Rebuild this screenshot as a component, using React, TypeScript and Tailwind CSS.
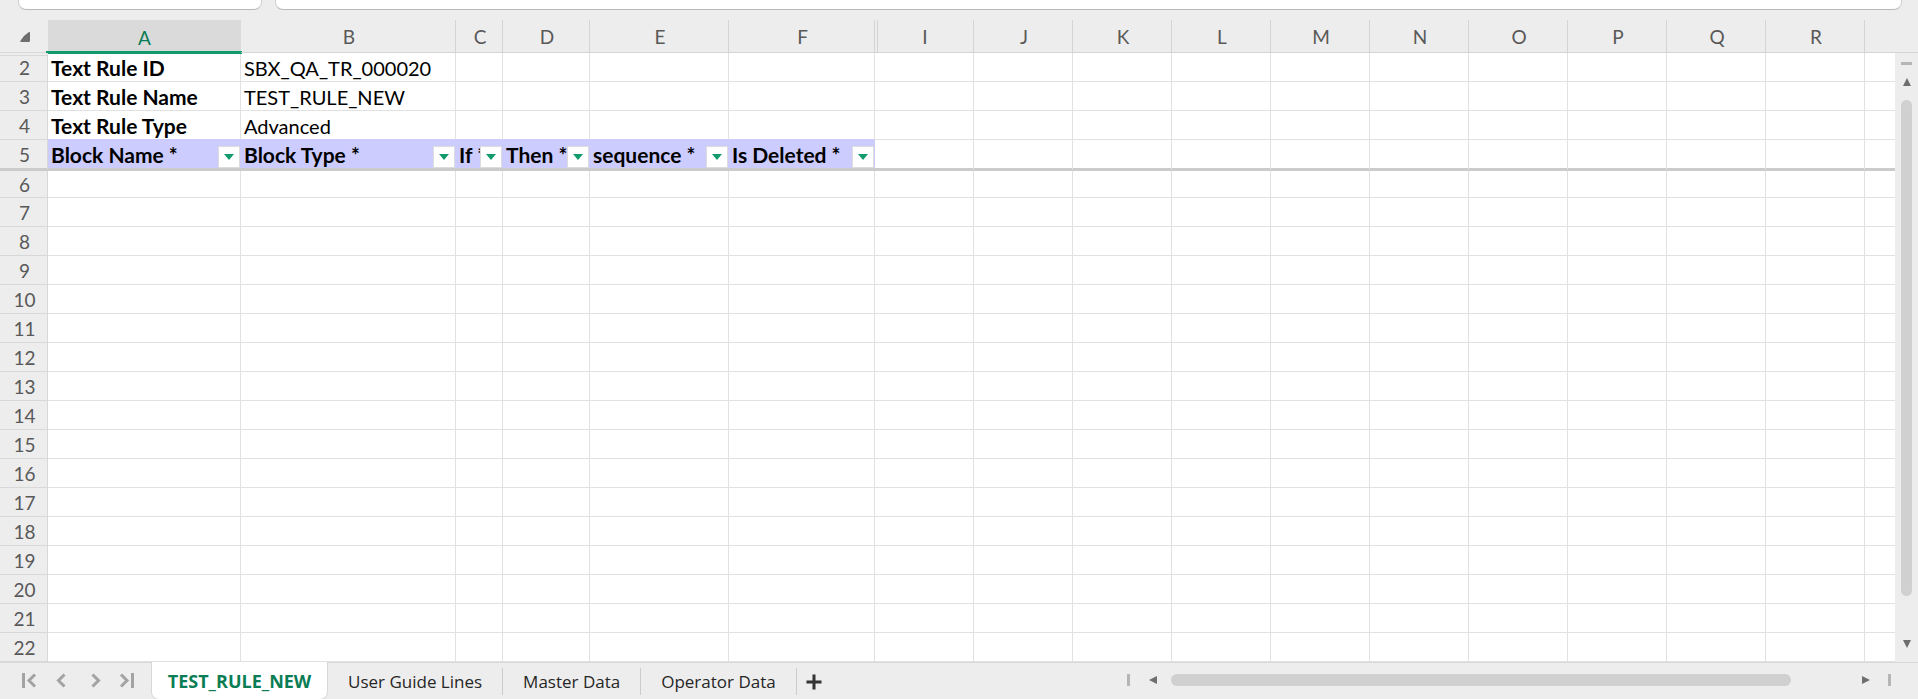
type Column = {
	name: string;
	width: string;
};

type FilterCell = {
	label: string;
	column: string;
};

const COLUMNS: Column[] = [
	{ name: 'A', width: 'w-[193px]' },
	{ name: 'B', width: 'w-[215px]' },
	{ name: 'C', width: 'w-[47px]' },
	{ name: 'D', width: 'w-[87px]' },
	{ name: 'E', width: 'w-[139px]' },
	{ name: 'F', width: 'w-[146px]' },
	...['I', 'J', 'K', 'L', 'M', 'N', 'O', 'P', 'Q', 'R'].map((name) => ({ name, width: 'w-[99px]' })),
]

const DETAILS = [
	{ row: 2, label: 'Text Rule ID', value: 'SBX_QA_TR_000020' },
	{ row: 3, label: 'Text Rule Name', value: 'TEST_RULE_NEW' },
	{ row: 4, label: 'Text Rule Type', value: 'Advanced' },
]

const FILTERS: FilterCell[] = [
	{ column: 'A', label: 'Block Name *' },
	{ column: 'B', label: 'Block Type *' },
	{ column: 'C', label: 'If *' },
	{ column: 'D', label: 'Then *' },
	{ column: 'E', label: 'sequence *' },
	{ column: 'F', label: 'Is Deleted *' },
]

const EMPTY_ROWS = Array.from({ length: 17 }, (_, i) => i + 6)

const TABS = ['User Guide Lines', 'Master Data', 'Operator Data']

const CELL = 'border-r border-b border-[#e1e1e1] p-0'
const ROW_HEAD = 'border-r border-b border-[#d8d8d8] bg-[#ededed] p-0 pt-[2px] pl-[2px] font-normal text-[#595959]'

function Toolbar() {
	return (
		<div className="flex h-5 items-start gap-[13px] pr-4 pl-[18px]">
			<input
				aria-label="Name box"
				className="h-[10px] w-[244px] rounded-b-lg border border-t-0 border-[#d0d0d0] border-b-[#b8b8b8] bg-white"
			/>
			<input
				aria-label="Formula bar"
				className="h-[10px] min-w-0 flex-1 rounded-b-lg border border-t-0 border-[#d0d0d0] border-b-[#b8b8b8] bg-white"
			/>
		</div>
	)
}

function ColumnHeads() {
	return (
		<tr className="h-[33px]">
			<th className="border-b border-[#d8d8d8] p-0">
				<button aria-label="Select all" className="flex w-full justify-end pt-[2px] pr-[18px]">
					<svg width="10" height="10" viewBox="0 0 10 10" fill="#6e6e6e">
						<path d="M8.600.3Q10-.3 10 1v7.500Q10 10 8.500 10H1Q-.4 10 .5 8.800 4 3 8.600.3z" />
					</svg>
				</button>
			</th>
			{COLUMNS.map(({ name }) => (
				<th
					key={name}
					scope="col"
					className={
						name === 'A'
							? 'relative bg-[#dadada] p-0 pt-[2px] font-normal text-[#0a7d55]'
							: 'relative border-r border-b border-[#d4d4d4] p-0 pt-[2px] pl-[2px] font-normal text-[#595959]'
					}
				>
					{name}
					{name === 'A' && <span className="absolute -right-px -bottom-px -left-[2px] h-[3px] bg-[#119a6b]" />}
					{name === 'I' && <span className="absolute top-0 bottom-0 left-[2px] w-px bg-[#d4d4d4]" />}
				</th>
			))}
			<th className="border-b border-[#d4d4d4] p-0" />
		</tr>
	)
}

function FilterRow() {
	return (
		<tr className="h-[31px]">
			<th scope="row" className="border-r border-b-[3px] border-r-[#d8d8d8] border-b-[#cbcbcb] bg-[#ededed] p-0 pt-[2px] pl-[2px] font-normal text-[#595959]">
				5
			</th>
			{COLUMNS.map(({ name }) => {
				const filter = FILTERS.find((f) => f.column === name)
				if (!filter) {
					return <td key={name} className="border-r border-b-[3px] border-r-[#e1e1e1] border-b-[#cbcbcb] p-0" />
				}
				return (
					<td key={name} className="relative overflow-hidden border-b-[3px] border-[#cbcbcb] bg-[#ccccff] p-0 pt-[2px] pl-[3px] text-[21px] leading-6 font-bold whitespace-nowrap">
						{filter.label}
						<button
							aria-label={`Filter ${filter.label}`}
							className="absolute right-px bottom-0 flex size-[22px] items-center justify-center border border-[#dcdcdc] bg-white"
						>
							<svg width="10" height="6" viewBox="0 0 10 6" fill="#119a6b">
								<path d="M0 0h10L5 6z" />
							</svg>
						</button>
					</td>
				)
			})}
			<td className="border-b-[3px] border-[#cbcbcb] p-0" />
		</tr>
	)
}

function Sheet() {
	return (
		<table className="min-w-0 flex-1 table-fixed border-separate border-spacing-0 bg-white font-['Lato',sans-serif] text-[19px] leading-6 text-black">
			<colgroup>
				<col className="w-12" />
				{COLUMNS.map(({ name, width }) => (
					<col key={name} className={width} />
				))}
				<col />
			</colgroup>
			<thead className="bg-[#ededed]">
				<ColumnHeads />
			</thead>
			<tbody>
				{DETAILS.map(({ row, label, value }) => (
					<tr key={row} className="h-[29px]">
						<th scope="row" className={`relative ${ROW_HEAD}`}>
							{row === 2 && <span className="absolute top-[2px] right-0 left-0 h-px bg-[#d8d8d8]" />}
							{row}
						</th>
						{COLUMNS.map(({ name }, i) => (
							<td
								key={name}
								className={
									row === 4 && i < FILTERS.length
										? 'border-r border-b border-r-[#e1e1e1] border-b-[#ccccff] p-0 pt-[2px] pl-[3px] text-xl leading-6 whitespace-nowrap first-of-type:text-[21px] first-of-type:leading-6 first-of-type:font-bold'
										: 'border-r border-b border-[#e1e1e1] p-0 pt-[2px] pl-[3px] text-xl leading-6 whitespace-nowrap first-of-type:text-[21px] first-of-type:leading-6 first-of-type:font-bold'
								}
							>
								{name === 'A' && label}
								{name === 'B' && value}
							</td>
						))}
						<td className="border-b border-[#e1e1e1] p-0" />
					</tr>
				))}
				<FilterRow />
				{EMPTY_ROWS.map((row) => (
					<tr key={row} className={row === 6 ? 'h-[27px]' : 'h-[29px]'}>
						<th scope="row" className={ROW_HEAD}>{row}</th>
						{COLUMNS.map(({ name }) => (
							<td key={name} className={CELL} />
						))}
						<td className="border-b border-[#e1e1e1] p-0" />
					</tr>
				))}
			</tbody>
		</table>
	)
}

function VerticalScroll() {
	return (
		<div className="flex w-[23px] flex-col">
			<div className="h-[33px] border-b border-[#d4d4d4]" />
			<div className="flex flex-1 flex-col items-center pt-[9px] pb-[14px]">
				<span className="h-[3px] w-[11px] bg-[#b5b5b5]" />
				<button aria-label="Scroll up" className="mt-[13px]">
					<svg width="8" height="8" viewBox="0 0 8 8" fill="#6e6e6e">
						<path d="M4 0l4 8H0z" />
					</svg>
				</button>
				<div className="mt-[14px] mb-11 w-[11px] flex-1 rounded-full bg-[#d0d0d0]" />
				<button aria-label="Scroll down">
					<svg width="8" height="8" viewBox="0 0 8 8" fill="#6e6e6e">
						<path d="M4 8l4-8H0z" />
					</svg>
				</button>
			</div>
		</div>
	)
}

function HorizontalScroll() {
	return (
		<div className="mr-[27px] mb-[3px] ml-auto flex h-3 w-[764px] items-center">
			<span className="h-3 w-[3px] bg-[#b5b5b5]" />
			<button aria-label="Scroll left" className="ml-[19px]">
				<svg width="8" height="8" viewBox="0 0 8 8" fill="#6e6e6e">
					<path d="M0 4l8-4v8z" />
				</svg>
			</button>
			<div className="mr-[71px] ml-[14px] h-3 flex-1 rounded-full bg-[#d0d0d0]" />
			<button aria-label="Scroll right">
				<svg width="8" height="8" viewBox="0 0 8 8" fill="#6e6e6e">
					<path d="M8 4L0 0v8z" />
				</svg>
			</button>
			<span className="ml-[18px] h-3 w-[3px] bg-[#b5b5b5]" />
		</div>
	)
}

function SheetNav() {
	return (
		<nav aria-label="Sheet navigation" className="mb-[2px] flex w-[151px] text-[#a3a3a3]">
			<button aria-label="First sheet" className="ml-[22px]">
				<svg width="15" height="15" viewBox="0 0 15 15" fill="none" stroke="currentColor" strokeWidth="3">
					<path d="M1.500 0v15M13 1.500L7 7.500l6 6" />
				</svg>
			</button>
			<button aria-label="Previous sheet" className="ml-[19px]">
				<svg width="10" height="15" viewBox="0 0 10 15" fill="none" stroke="currentColor" strokeWidth="3">
					<path d="M8.500 1.500l-6 6 6 6" />
				</svg>
			</button>
			<button aria-label="Next sheet" className="ml-[25px]">
				<svg width="10" height="15" viewBox="0 0 10 15" fill="none" stroke="currentColor" strokeWidth="3">
					<path d="M1.500 1.500l6 6-6 6" />
				</svg>
			</button>
			<button aria-label="Last sheet" className="ml-[18px]">
				<svg width="15" height="15" viewBox="0 0 15 15" fill="none" stroke="currentColor" strokeWidth="3">
					<path d="M13.500 0v15M2 1.500l6 6-6 6" />
				</svg>
			</button>
		</nav>
	)
}

function TabBar() {
	return (
		<div className="flex h-[38px] items-center border-t border-[#d8d8d8] font-['Open_Sans',sans-serif] text-[17px] text-[#262626]">
			<SheetNav />
			<button className="-mt-[2px] h-[38px] w-[177px] rounded-b-lg border border-t-0 border-[#d8d8d8] bg-white pt-[2px] text-lg font-bold text-[#0a7d55]">
				TEST_RULE_NEW
			</button>
			{TABS.map((tab) => (
				<button key={tab} className="h-[27px] border-r border-[#cccccc] px-5 whitespace-nowrap">
					{tab}
				</button>
			))}
			<button aria-label="New sheet" className="ml-[9px]">
				<svg width="16" height="16" viewBox="0 0 16 16" fill="none" stroke="#333333" strokeWidth="3">
					<path d="M8 .5v15M.5 8h15" />
				</svg>
			</button>
			<HorizontalScroll />
		</div>
	)
}

export default function App() {
	return (
		<main className="flex min-h-screen flex-col bg-[#ededed]">
			<Toolbar />
			<div className="flex">
				<Sheet />
				<VerticalScroll />
			</div>
			<TabBar />
		</main>
	)
}
